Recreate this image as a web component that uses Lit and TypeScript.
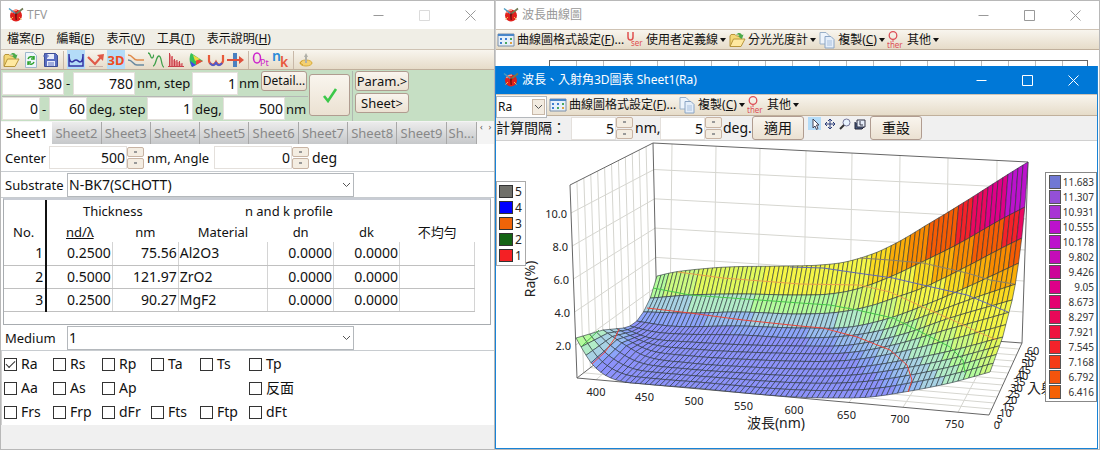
import { LitElement, html, svg, css } from "lit";
import { customElement, property } from "lit/decorators.js";

type Pt = [number, number];

/* ---------- icons ---------- */
const logo = html`<svg class="logo" width="16" height="16" viewBox="0 0 16 16" aria-hidden="true">
  <circle cx="8" cy="8.500" r="6" fill="#e0201c"/><path d="M3.500 6C5 3.500 7 3 9 3.200" stroke="#ff9a80" stroke-width="1.500" fill="none"/>
  <path d="M1 1.500 8 7" stroke="#4a9ac0" stroke-width="1.400" fill="none"/><path d="M8 7 15 1.500" stroke="#6f7a52" stroke-width="1.600" fill="none"/>
  <path d="M7 6.500h2.500l-.8 2.500.3 4H7.500L7 9z" fill="#7c1410"/><path d="M2.500 12.500 5 10M13.500 12.500 11 10" stroke="#f6b64a" stroke-width="1"/></svg>`;
const ic = (body: unknown, w = 18) => html`<svg width=${w} height="18" viewBox="0 0 18 18" aria-hidden="true">${body}</svg>`;
const folder = svg`<path d="M2 15V5l1-1.500h4L8.500 5H13v3" fill="#f5d878" stroke="#b8963c"/><path d="M2 15.500 5.500 8H17l-4 7.500z" fill="#ffe9a0" stroke="#b8963c"/><path d="M8 4c2-3 5-2.500 6 0l1.500-.5L14 8l-4-2.500 1.500-.5C11 3.500 10 3 8 4z" fill="#4aaa4a"/>`;
const refresh = svg`<path d="M3.500 1.500h8l3 3v12h-11z" fill="#eef6fb" stroke="#9fb8cc"/><path d="M6 8c1-2.500 4-3 6-1M12 5v3H9M12 11c-1 2.500-4 3-6 1M6 14v-3h3" fill="none" stroke="#2fa32f" stroke-width="1.500"/>`;
const save = svg`<path d="M2.500 2.500h11l2 2v11h-13z" fill="#5a6ec0" stroke="#3d4d94"/><path d="M5 3h7v5H5zM5 10h8v5H5z" fill="#e8ecfa"/><path d="M1 5h5M4 2.500 6.500 5 4 7.500M6 12h6M6 14h6" stroke="#5a6ec0" fill="none"/>`;
const curveBox = svg`<path d="M2 3v12h14V3M2 3c0 6 1 8 3 8 1.500 0 2-2 4-2s2.500 2 4 2c2 0 3-2 3-8" fill="none" stroke="#3434a4" stroke-width="1.500"/>`;
const reflect = svg`<path d="M1 6l7 7 6-7" fill="none" stroke="#e05a48" stroke-width="2.200"/><path d="M10 4 17 3l-1 7z" fill="#e05a48"/><path d="M2 15.500h14" stroke="#c9b0a8"/>`;
const threeD = svg`<text x="9" y="14" text-anchor="middle" font-size="13" font-weight="700" fill="#ee4a22">3D</text>`;
const wave = svg`<path d="M1 4c5 0 5 5 9 5h7" fill="none" stroke="#e08a4a" stroke-width="1.500"/><path d="M1 9c5 0 5 5 9 5h7" fill="none" stroke="#6a8aa0" stroke-width="1.500"/>`;
const green2 = svg`<path d="M1 2c3 0 2 5 4 5s1-3 2-3M6 15c3 0 3-10 6-10s2 11 5 11" fill="none" stroke="#3fa04a" stroke-width="1.300"/>`;
const bars = svg`<path d="M2 15V2l2 2v2l2-1v4l2-1v2l2-1v2l2 0v1l3 1v3z" fill="#e89090"/><path d="M2.500 2v13M5 5v10M7.500 8v7M10 9v6M12.500 10v5M15 12v3M1 15.500h16" stroke="#c8404a" fill="none"/>`;
const gamut = svg`<path d="M4 2 16 10 5 16C2 12 2 6 4 2z" fill="#35c05a"/><path d="M9 8l7 2-7 4z" fill="#f04838"/><path d="M3 10l6 4-4 2z" fill="#4048e8"/><path d="M6 4l7 4-5 2z" fill="#f0d840"/>`;
const curveRed = svg`<path d="M2 4v6c1 4 5 5 7 1 2 4 6 3 7-1V4" fill="none" stroke="#e85a3a" stroke-width="2.200"/><path d="M3 12c2 3 5 3 6-1 1 4 4 4 6 1" fill="none" stroke="#5058c8" stroke-width="2"/>`;
const slab = svg`<path d="M6 2h4v14H6z" fill="#4a80c0"/><path d="M0 9h14" stroke="#e0503c" stroke-width="2"/><path d="M12 5l5 4-5 4z" fill="#e0503c"/>`;
const opt = svg`<ellipse cx="5" cy="7" rx="3.500" ry="5" fill="none" stroke="#cc22cc" stroke-width="1.500"/><text x="8" y="15" font-size="9" fill="#cc22cc">Pt</text>`;
const nk = svg`<text x="0" y="10" font-size="14" font-weight="600" fill="#2a8ad8">n</text><text x="8" y="16" font-size="14" font-weight="600" fill="#e8583c">k</text>`;
const gold = svg`<ellipse cx="9" cy="12" rx="6" ry="3" fill="#f4d070" stroke="#d8ac3a"/><path d="M9 2 11 6H10v6H8V6H7z" fill="#b0b0a8"/><path d="M5 10l-2 2 3 2" fill="none" stroke="#d0a030"/>`;
const sheet = svg`<path d="M1 3h16v12H1z" fill="#e6f0fa" stroke="#7a8ea8"/><path d="M1 3h16v2H1z" fill="#4a86c8"/><path d="M3 7h2v2H3zM8 7h2v2H8zM3 11h2v2H3z" fill="#3f7ed0"/><path d="M13 7h2v2h-2zM8 11h2v2H8z" fill="#48a860"/><path d="M13 11h2v2h-2z" fill="#e0a040"/>`;
const user = svg`<path d="M2 1v5c0 4 5 4 5 0V1" fill="none" stroke="#e05050" stroke-width="1.500"/><text x="5" y="15" font-size="8" fill="#e05050">ser</text>`;
const copy = svg`<path d="M2 1.500h6l3 3V13H2z" fill="#eef4fb" stroke="#9ab0c8"/><path d="M7 5.500h6l3 3V17H7z" fill="#e4eefa" stroke="#8aa4c4"/><path d="M9 10h5M9 12h5M9 14h5" stroke="#a9c0de"/>`;
const other = svg`<circle cx="6" cy="4.500" r="3.800" fill="none" stroke="#dd5058" stroke-width="1.300"/><path d="M6 8v3" stroke="#dd5058"/><text x="0" y="17" font-size="8" fill="#dd5058">ther</text>`;

@customElement("win-title")
class WinTitle extends LitElement {
  @property() caption = "";
  @property({ type: Boolean, reflect: true }) active = false;
  @property({ type: Boolean }) fixed = false;
  static styles = css`
    :host { display: block; background: #fff; color: #999; }
    :host([active]) { background: #0078d7; color: #fff; }
    .bar { display: flex; align-items: center; height: 28px; padding: 0 1px 0 7px; gap: 3px; }
    .cap { flex: 1; font-weight: normal; font-size: 12px; margin: 0; white-space: nowrap; }
    .btns { display: flex; }
    button { width: 46px; height: 28px; border: 0; background: none; padding: 0; display: grid; place-items: center; color: inherit; }
    .dim { opacity: 0.35; }
  `;
  render() {
    const g = (d: string) => html`<svg width="11" height="11" viewBox="0 0 11 11"><path d=${d} fill="none" stroke="currentColor"/></svg>`;
    return html`<div class="bar">${logo}<h1 class="cap">${this.caption}</h1>
      <div class="btns"><button aria-label="Minimize">${g("M.5 5.500h10")}</button>
      <button class=${this.fixed ? "dim" : ""} aria-label="Maximize">${g("M.5.5h10v10H.5z")}</button>
      <button aria-label="Close">${g("M.5.5l10 10M10.500.5l-10 10")}</button></div></div>`;
  }
}

const controls = css`
  * { box-sizing: border-box; }
  button, input, select { font: inherit; color: #111; margin: 0; }
  .bar { display: flex; align-items: center; height: 21px; background: linear-gradient(#f8f5ee, #e6dcc9); border-top: 1px solid #cfc3b4; border-bottom: 1px solid #c0b09c; font-size: 12px; white-space: nowrap; }
  .tool { display: flex; align-items: center; justify-content: center; gap: 2px; height: 19px; padding: 0; border: 0; background: none; }
  .tool svg { flex: none; }
  .caret { border: 3px solid transparent; border-top: 4px solid #111; border-bottom: 0; }
  .push { border: 1px solid #b09c90; border-radius: 3px; background: linear-gradient(#f9f5ee, #ebe1d2); padding: 0; line-height: 18px; white-space: nowrap; }
  .num { border: 1px solid #e4e0dc; background: #fff; text-align: right; padding: 0 1px; height: 23px; min-width: 0; }
  .spin { display: grid; grid-template-rows: 1fr 1fr; gap: 1px; width: 17px; height: 22px; }
  .spin button { border: 1px solid #c8b4a4; border-radius: 2px; background: #f4ede2; padding: 0; display: grid; place-items: center; }
  .dot { width: 3px; height: 2px; background: #999; }
  .combo { display: grid; align-items: center; }
  .combo select { grid-area: 1 / 1; width: 100%; height: 100%; appearance: none; border: 1px solid #b4b8bc; border-radius: 0; background: #fff; padding: 0 1px; }
  .combo svg { grid-area: 1 / 1; justify-self: end; margin-right: 3px; pointer-events: none; }
`;
const spin = html`<span class="spin"><button aria-label="Up"><i class="dot"></i></button><button aria-label="Down"><i class="dot"></i></button></span>`;
const chevron = html`<svg width="9" height="6" viewBox="0 0 9 6"><path d="M1 1l3.500 3.500L8 1" fill="none" stroke="#555"/></svg>`;
const item = (icon: unknown, label: unknown, caret = true) =>
  html`<button class="tool">${ic(icon)}<span>${label}</span>${caret ? html`<i class="caret"></i>` : ""}</button>`;

/* ---------- film design window ---------- */
@customElement("film-window")
class FilmWindow extends LitElement {
  static styles = [controls, css`
    :host { display: flex; flex-direction: column; background: #fff; border: 1px solid #b8b8b8; min-width: 0; overflow: hidden; }
    .menu { display: flex; gap: 12px; height: 20px; align-items: center; padding-left: 6px; background: #f0eee6; font-size: 12px; }
    .menu a { color: #111; text-decoration: none; white-space: nowrap; }
    .icons { gap: 2px; padding-left: 1px; }
    .icons .tool { width: 18px; }
    .icons .on { background: #b4dcf8; }
    .sep { width: 1px; height: 18px; background: #c8b8a8; margin: 0 1px; }
    .range { display: flex; background: #c6dfc4; height: 51px; padding: 1px 0 0 1px; gap: 2px; }
    .lines { width: 305px; display: grid; grid-template-rows: 24px 24px; row-gap: 1px; }
    .line { display: flex; align-items: center; white-space: nowrap; }
    .line + .line { border-top: 1px solid #b4b8b4; }
    .line span, label { font-size: 13px; }
    .w62 { width: 62px; } .w38 { width: 38px; } .w46 { width: 46px; }
    .t9 { width: 9px; padding-left: 2px; } .t56 { width: 57px; padding-left: 2px; } .t60 { width: 60px; padding-left: 2px; } .t24 { width: 23px; padding-left: 1px; } .t30 { width: 30px; padding-left: 2px; }
    .detail { width: 46px; height: 20px; font-size: 12px; align-self: flex-start; }
    .apply { width: 41px; height: 42px; margin-top: 3px; display: grid; place-items: center; }
    .side { display: grid; grid-template-rows: 20px 20px; gap: 2px; border-left: 1px solid #b0b8b0; padding-left: 2px; }
    .side .push { width: 54px; font-size: 13px; }
    .tabs { display: flex; height: 23px; background: #f4f4f4; padding-top: 1px; }
    .tab { flex: 49 1 0; min-width: 0; border: 0; border-right: 1px solid #a8a8a8; background: linear-gradient(#ececec, #c6c8ca); color: #888; font-size: 13px; padding: 0; white-space: nowrap; }
    .tab.on { flex-grow: 52; background: #fff; color: #111; border: 0; }
    .tab.last { flex-grow: 30; }
    .scroll { flex: 17 1 0; display: flex; justify-content: space-around; font-size: 9px; line-height: 10px; color: #555; }
    .row { display: flex; align-items: center; height: 28px; padding-left: 4px; border-bottom: 1px solid #c8ccd0; white-space: nowrap; }
    .short { height: 26px; }
    .w44 { width: 44px; } .w78 { width: 78px; } .w62l { width: 62px; }
    .gap { padding: 0 3px; }
    .w70 { width: 70px; padding-left: 3px; }
    .wide { width: 287px; height: 24px; }
    .grid { margin: 0 3px 0 2px; height: 127px; border: 1px solid #a8acb0; border-top: 2px solid #c8ccd4; }
    table { border-collapse: collapse; table-layout: fixed; width: 97%; }
    th { font-weight: normal; font-size: 13px; padding: 0; height: 21px; }
    td { text-align: right; padding: 0 1px; height: 23px; border-bottom: 1px solid #c0c0c0; border-right: 1px solid #d4d4d4; line-height: 20px; }
    .no { border-right: 2px solid #111; padding-right: 2px; width: 9%; }
    .thick { width: 28%; }
    .left { text-align: left; }
    .u { text-decoration: underline; }
    .checks { display: grid; grid-template-columns: repeat(6, 49px); grid-auto-rows: 24px; padding: 1px 0 0 2px; height: 74px; border-left: 1px solid #d0d0d0; }
    .checks label { display: flex; align-items: center; gap: 4px; white-space: nowrap; font-size: 14px; }
    .checks input { appearance: none; width: 13px; height: 13px; border: 1px solid #333; display: grid; place-items: center; }
    .checks input:checked::before { content: ""; width: 8px; height: 4px; border-left: 1px solid #333; border-bottom: 1px solid #333; transform: rotate(-45deg) translate(1px, -1px); }
    .status { flex: 1; background: #f0f0f0; }
    .c9 { width: 9%; } .c14 { width: 14%; } .c19 { width: 19%; } .c16 { width: 16%; }
  `];
  num(v: string, cls: string, label: string) {
    return html`<input class="num ${cls}" .value=${v} aria-label=${label}>`;
  }
  render() {
    const menu = [["檔案", "F"], ["編輯", "E"], ["表示", "V"], ["工具", "T"], ["表示說明", "H"]];
    const rows = [["1", "0.2500", "75.56", "Al2O3"], ["2", "0.5000", "121.97", "ZrO2"], ["3", "0.2500", "90.27", "MgF2"]];
    const checks = ["Ra", "Rs", "Rp", "Ta", "Ts", "Tp", "Aa", "As", "Ap", "", "", "反面", "Frs", "Frp", "dFr", "Fts", "Ftp", "dFt"];
    const tool = (b: unknown, on = false) => html`<button class="tool ${on ? "on" : ""}">${ic(b)}</button>`;
    const sep = html`<i class="sep"></i>`;
    return html`
      <win-title caption="TFV" fixed></win-title>
      <nav class="menu">${menu.map(([t, k]) => html`<a href="#">${t}(<u>${k}</u>)</a>`)}</nav>
      <div class="bar icons">${tool(folder)}${tool(refresh)}${tool(save)}${sep}${tool(curveBox, true)}${tool(reflect)}${tool(threeD, true)}${tool(wave)}${tool(green2)}${tool(bars)}${tool(gamut)}${tool(curveRed)}${tool(slab)}${sep}${tool(opt)}${tool(nk)}${sep}${tool(gold)}</div>
      <div class="range">
        <div class="lines">
          <div class="line">${this.num("380", "w62", "from nm")}<span class="t9">-</span>${this.num("780", "w62", "to nm")}<span class="t56">nm, step</span>${this.num("1", "w46", "step nm")}<span class="t24">nm</span><button class="push detail">Detail...</button></div>
          <div class="line">${this.num("0", "w38", "from deg")}<span class="t9">-</span>${this.num("60", "w38", "to deg")}<span class="t60">deg, step</span>${this.num("1", "w46", "step deg")}<span class="t30">deg,</span>${this.num("500", "w62", "nm")}<span class="t24">nm</span></div>
        </div>
        <button class="push apply" aria-label="Apply"><svg width="16" height="16" viewBox="0 0 16 16"><path d="M2 9l4 5L14 2" fill="none" stroke="#3cc84a" stroke-width="2.600"/></svg></button>
        <div class="side"><button class="push">Param.&gt;</button><button class="push">Sheet&gt;</button></div>
      </div>
      <div class="tabs">
        <button class="tab on">Sheet1</button>${[2, 3, 4, 5, 6, 7, 8, 9].map((n) => html`<button class="tab">Sheet${n}</button>`)}<button class="tab last">Sh...</button>
        <span class="scroll"><span>‹</span><span>›</span></span>
      </div>
      <div class="row"><label class="w44" for="center">Center</label><input id="center" class="num w78" .value=${"500"}>${spin}<label class="w70" for="angle">nm, Angle</label><input id="angle" class="num w78" .value=${"0"}>${spin}<span class="gap">deg</span></div>
      <div class="row short"><label class="w62l" for="sub">Substrate</label><span class="combo wide"><select id="sub"><option>N-BK7(SCHOTT)</option></select>${chevron}</span></div>
      <div class="grid"><table>
        <colgroup><col class="c9"><col class="c14"><col class="c14"><col class="c19"><col class="c14"><col class="c14"><col class="c16"></colgroup>
        <thead><tr><th class="no"></th><th colspan="2">Thickness</th><th colspan="3">n and k profile</th><th></th></tr>
        <tr><th class="no">No.</th><th class="u">nd/λ</th><th>nm</th><th>Material</th><th>dn</th><th>dk</th><th>不均勻</th></tr></thead>
        <tbody>${rows.map((r) => html`<tr><td class="no">${r[0]}</td><td>${r[1]}</td><td>${r[2]}</td><td class="left">${r[3]}</td><td>0.0000</td><td>0.0000</td><td></td></tr>`)}</tbody>
      </table></div>
      <div class="row short"><label class="w62l" for="med">Medium</label><span class="combo wide"><select id="med"><option>1</option></select>${chevron}</span></div>
      <div class="checks">${checks.map((c) => (c ? html`<label><input type="checkbox" ?checked=${c === "Ra"}>${c}</label>` : html`<span></span>`))}</div>
      <div class="status"></div>`;
  }
}

/* ---------- 3D surface ---------- */
const hermite = (p: Pt[], x: number): number => {
  let i = 0;
  while (i < p.length - 2 && x > p[i + 1][0]) i++;
  const slope = (a: Pt, b: Pt) => (b[1] - a[1]) / (b[0] - a[0]);
  const a = p[i], b = p[i + 1], h = b[0] - a[0], t = (x - a[0]) / h;
  const m = slope(a, b);
  const m0 = i > 0 ? (slope(p[i - 1], a) + m) / 2 : m;
  const m1 = i < p.length - 2 ? (m + slope(b, p[i + 2])) / 2 : m;
  const t2 = t * t, t3 = t2 * t;
  return (2 * t3 - 3 * t2 + 1) * a[1] + (t3 - 2 * t2 + t) * h * m0 + (3 * t2 - 2 * t3) * b[1] + (t3 - t2) * h * m1;
};
const mix = (a: number, b: number, t: number) => a + (b - a) * t;
const frontX: Pt[] = [[380, 576], [400, 596], [450, 645], [500, 695], [550, 745], [600, 796], [650, 849], [700, 903], [750, 958], [780, 990]];
const backX: Pt[] = [[380, 657], [400, 673], [450, 717], [500, 761], [550, 807], [600, 853], [650, 901], [700, 949], [750, 998], [780, 1028]];
const profiles: Record<number, Pt[]> = {
  12: [[657, 276], [675, 272], [700, 269], [727, 267], [790, 266], [820, 265], [845, 262], [875, 253], [900, 241], [925, 226], [950, 211], [985, 189], [1010, 173], [1028, 162]],
  11: [[652, 298], [690, 295], [740, 294], [800, 295], [830, 294], [857, 289], [890, 277], [920, 263], [960, 243], [1000, 220], [1025, 207]],
  10: [[646, 312], [690, 313], [740, 312], [800, 314], [840, 312], [870, 306], [900, 296], [920, 289], [960, 270], [1000, 249], [1022, 238]],
  9: [[636, 321], [670, 326], [740, 326], [800, 328], [850, 327], [890, 318], [930, 303], [963, 289], [1019, 263]],
  8: [[630, 326], [655, 332], [680, 334], [740, 335], [800, 338], [855, 335], [890, 328], [933, 313], [977, 297], [1016, 284]],
  7: [[623, 328], [650, 338], [690, 342], [800, 346], [850, 345], [900, 335], [950, 318], [1012, 300]],
  4: [[603, 330], [625, 345], [645, 356], [690, 363], [750, 367], [800, 369], [850, 368], [900, 361], [950, 351], [1003, 337]],
  0: [[576, 338], [584, 352], [592, 364], [605, 375], [620, 381], [645, 384], [695, 388], [745, 393], [796, 397], [830, 398], [870, 397], [910, 391], [950, 383], [990, 372]],
};
const gridX = (nm: number, r: number) => mix(hermite(frontX, nm), hermite(backX, nm), r / 12);
const vertex = (nm: number, r: number): Pt => {
  const x = gridX(nm, r);
  if (profiles[r]) return [x, hermite(profiles[r], x)];
  const [lo, hi] = r < 4 ? [0, 4] : [4, 7];
  return [x, mix(vertex(nm, lo)[1], vertex(nm, hi)[1], (r - lo) / (hi - lo))];
};
const floorY = (x: number, s: number) => mix(378 + ((x - 577) * 37) / 412, 316 + ((x - 657) * 27) / 365, s);
const unit = (x: number, s: number) => mix(16.5 + (x - 577) / 275, 14.65 + (x - 657) / 430, s);
const ramp: [number, string][] = [[0.75, "#8c92fa"], [0.95, "#8ca4fa"], [1.2, "#98bcf2"], [1.55, "#a8d2e4"], [1.9, "#b2ecc8"], [2.3, "#b4fc9c"], [2.7, "#ccfa80"], [3.1, "#e2fa5c"], [4.2, "#f5f646"], [4.8, "#fada20"], [5.6, "#faac08"], [6.3, "#f88a00"], [7.4, "#f55c04"], [8, "#f4222a"], [8.8, "#ea0860"], [9.6, "#de0088"], [99, "#bc12cc"]];
const tint = (v: number) => ramp.find(([m]) => v < m)![1];

function surface() {
  const faces = [];
  for (let r = 11; r >= 0; r--)
    for (let nm = 380; nm < 780; nm += 5) {
      const q = [vertex(nm, r), vertex(nm + 5, r), vertex(nm + 5, r + 1), vertex(nm, r + 1)];
      const cx = (q[0][0] + q[2][0]) / 2, cy = (q[0][1] + q[1][1] + q[2][1] + q[3][1]) / 4, s = (r + 0.5) / 12;
      const v = (floorY(cx, s) - cy) / unit(cx, s);
      faces.push(svg`<path d="M${q.map((p) => p.map((n) => n.toFixed(1)).join(" ")).join("L")}Z" fill=${tint(v)}/>`);
    }
  return faces;
}
const poly = (s: string, color: string) => svg`<polyline points=${s} fill="none" stroke=${color}/>`;

@customElement("surface-chart")
class SurfaceChart extends LitElement {
  static styles = css`
    :host { display: block; background: #fff; min-height: 0; }
    .plot { display: block; width: 100%; height: 100%; }
    .wall { stroke: #d6d6d0; fill: none; }
    .frame { stroke: #666; fill: none; }
    .mesh { stroke: #263038; stroke-width: 0.6; stroke-linejoin: round; }
    .lab { font-size: 11px; fill: #222; }
    .axis { font-size: 14px; fill: #222; }
    .key { font-size: 12px; fill: #222; }
    .small { font-size: 10px; fill: #333; }
  `;
  render() {
    const nms = [400, 450, 500, 550, 600, 650, 700, 750];
    const line = (a: number, b: number, c: number, d: number) => svg`<line x1=${a} y1=${b} x2=${c} y2=${d}/>`;
    const keys: [string, string][] = [["5", "#70706a"], ["4", "#0000ff"], ["3", "#f06408"], ["2", "#146414"], ["1", "#f42024"]];
    const scale: [string, string][] = [["11.683", "#7078d4"], ["11.307", "#9450d8"], ["10.931", "#a834d4"], ["10.555", "#bc12cc"], ["10.178", "#bc12cc"], ["9.802", "#c40cb8"], ["9.426", "#cc0498"], ["9.05", "#de0088"], ["8.673", "#e40070"], ["8.297", "#e80858"], ["7.921", "#ee1440"], ["7.545", "#f4222a"], ["7.168", "#f43c18"], ["6.792", "#f4540c"], ["6.416", "#f46004"]];
    return html`<svg class="plot" viewBox="496 141 601 307" preserveAspectRatio="xMidYMid meet" role="img" aria-label="Ra(%)">
      <g class="wall">
        ${Array.from({ length: 11 }, (_, i) => { const t = (i + 1) / 12; return line(mix(570, 653, t), mix(185, 143, t), mix(577, 657, t), mix(378, 316, t)); })}
        ${[2, 4, 6, 8, 10].map((v) => [line(577 - v * 0.6, 378 - 16.5 * v, 657 - v * 0.3, 316 - 14.65 * v), line(657 - v * 0.3, 316 - 14.65 * v, 1022 + v * 0.5, 343 - 15.5 * v)])}
        ${nms.map((n) => { const b = hermite(backX, n); return [line(b - 1, 143 + (b - 653) * 0.051, b - 3, 316 + (b - 657) * 0.074), line(hermite(frontX, n), floorY(hermite(frontX, n), 0), b - 3, floorY(b, 1))]; })}
        ${Array.from({ length: 11 }, (_, i) => { const t = (i + 1) / 12; return line(mix(577, 657, t), mix(378, 316, t), mix(989, 1022, t), mix(415, 343, t)); })}
      </g>
      <path class="frame" d="M577 378 570 185 653 143 1028 162 1022 343 989 415 577 378 657 316 653 143M657 316 1022 343"/>
      <g class="mesh">${surface()}</g>
      <g>
        ${poly("647,308 690,313 743,320 800,326 823,328 857,337 890,350 907,365 912,380 908,392", "#e8483c")}
        ${poly("619,329 615,338 605,352 592,364", "#e8483c")}
        ${poly("653,288 690,295 800,303 830,305 857,310 893,318 923,333 950,347 963,360 965,373", "#48c84c")}
        ${poly("582,346 599,330", "#48b84c")}
        ${poly("678,272 723,278 800,284 860,285 890,292 923,307 957,322 978,332 997,340", "#e8a04c")}
        ${poly("790,267 823,268 857,273 893,278 923,285 967,295 1008,312", "#6068b0")}
        ${poly("860,258 890,260 923,263 967,273 990,280 1014,284", "#8c8068")}
      </g>
      ${[2, 4, 6, 8, 10].map((v) => svg`<text class="lab" text-anchor="end" x=${572 - v / 2} y=${383 - 16.5 * v}>${v.toFixed(1)}</text>`)}
      ${nms.map((n, i) => svg`<text class="lab" text-anchor="middle" x=${hermite(frontX, n) - i / 2} y=${mix(396, 428, i / 7)}>${n}</text>`)}
      ${Array.from({ length: 13 }, (_, i) => svg`<text class="lab" text-anchor="middle" x=${mix(997, 1030, i / 12) + (i > 1 ? 3 : 0)} y=${mix(429, 355, i / 12)}>${i * 5}</text>`)}
      <text class="axis" text-anchor="middle" x="776" y="428">波長(nm)</text>
      <text class="axis" x="1027" y="393">入射角</text>
      <text class="axis" text-anchor="middle" transform="translate(535 279) rotate(-90)">Ra(%)</text>
      <rect x="496.500" y="181.500" width="29" height="84" fill="#fff" stroke="#aaa"/>
      ${keys.map(([t, c], i) => svg`<rect x="499.500" y=${185.5 + i * 16} width="13" height="12" fill=${c} stroke="#333"/><text class="key" x="515" y=${196 + i * 16}>${t}</text>`)}
      <rect x="1045.500" y="172.500" width="51" height="229" fill="#fff" stroke="#888"/>
      ${scale.map(([t, c], i) => svg`<rect x="1049.500" y=${175.5 + i * 15} width="11" height="13" fill=${c} stroke="#555"/><text class="small" text-anchor="end" x="1094" y=${186 + i * 15}>${t}</text>`)}
    </svg>`;
  }
}

@customElement("surface-window")
class SurfaceWindow extends LitElement {
  static styles = [controls, css`
    :host { display: flex; flex-direction: column; background: #f0f0f0; border: 1px solid #1883d7; border-top: 0; box-sizing: border-box; overflow: hidden; }
    .bar { height: 22px; gap: 2px; }
    .mode { width: 51px; height: 19px; }
    .mode svg { box-sizing: content-box; padding: 4px 1px; margin-right: 2px; border: 1px solid #c8b8a8; background: #f2ebe0; }
    .opts { display: flex; align-items: center; height: 25px; white-space: nowrap; border-bottom: 1px solid #d0d0d0; }
    .lead { width: 75px; }
    .w46 { width: 45px; }
    .t27 { width: 27px; padding-left: 2px; }
    .t30 { width: 30px; padding-left: 1px; }
    .big { width: 52px; height: 24px; }
    .modes { display: flex; align-self: flex-start; padding: 1px 4px; gap: 2px; width: 66px; }
    .modes button { width: 13px; height: 13px; border: 0; background: none; padding: 0; display: grid; place-items: center; }
    .modes .on { background: #b4dcf8; }
    surface-chart { flex: 1; }
  `];
  render() {
    const m = (b: unknown, label: string, on = false) => html`<button class=${on ? "on" : ""} aria-label=${label}><svg width="12" height="12" viewBox="0 0 12 12">${b}</svg></button>`;
    return html`
      <win-title active caption="波長、入射角3D圖表 Sheet1(Ra)"></win-title>
      <div class="bar"><span class="combo mode"><select aria-label="Mode"><option>Ra</option></select>${chevron}</span>
        ${item(sheet, html`曲線圖格式設定(<u>F</u>)...`, false)}${item(copy, html`複製(<u>C</u>)`)}${item(other, "其他")}</div>
      <div class="opts"><span class="lead">計算間隔：</span><input class="num w46" aria-label="nm" .value=${"5"}>${spin}<span class="t27">nm,</span><input class="num w46" aria-label="deg" .value=${"5"}>${spin}<span class="t30">deg.</span>
        <button class="push big">適用</button>
        <span class="modes">${m(svg`<path d="M4 1v9l2-2 1.500 3.500 1.500-1L7.500 7H10z" fill="#fff" stroke="#445"/>`, "Select", true)}${m(svg`<path d="M6 1v10M1 6h10M4 3l2-2 2 2M4 9l2 2 2-2M3 4 1 6l2 2M9 4l2 2-2 2" fill="none" stroke="#2a3c78"/>`, "Move")}${m(svg`<circle cx="7.500" cy="4.500" r="3.500" fill="#e8f4ff" stroke="#779"/><path d="M5 7l-4 4" stroke="#333" stroke-width="2"/>`, "Zoom")}${m(svg`<path d="M1 4v7h7l2-2" fill="#445a80" stroke="#223"/><path d="M3 2h8v7H3z" fill="#e4ecf8" stroke="#334"/><path d="M6 3v4h3" fill="none" stroke="#334"/>`, "Rotate")}</span>
        <button class="push big">重設</button></div>
      <surface-chart></surface-chart>`;
  }
}

@customElement("curve-window")
class CurveWindow extends LitElement {
  static styles = [controls, css`
    :host { display: block; background: #fff; border: 1px solid #b8b8b8; border-left-color: #ccc; min-width: 0; overflow: hidden; }
    .bar { gap: 2px; padding-left: 1px; }
    .plot { margin: 10px 11px 0 53px; height: 60px; border: 1px solid #666; background: repeating-linear-gradient(90deg, transparent 0 26px, #bbb 26px 27px); }
  `];
  render() {
    return html`<win-title caption="波長曲線圖"></win-title>
      <div class="bar">${item(sheet, html`曲線圖格式設定(<u>F</u>)...`, false)}${item(user, "使用者定義線")}${item(folder, "分光光度計")}${item(copy, html`複製(<u>C</u>)`)}${item(other, "其他")}</div>
      <div class="plot"></div>`;
  }
}

@customElement("app-root")
class AppRoot extends LitElement {
  static styles = css`
    :host { display: grid; grid-template-columns: 495fr 605fr; min-height: 100vh; background: #fff; color: #111; font: 14px/20px "Noto Sans", "Noto Sans CJK TC", sans-serif; }
    film-window { box-sizing: border-box; }
    .desk { position: relative; min-width: 0; display: grid; }
    surface-window { position: absolute; inset: 66px 2px 1px 0; }
  `;
  render() {
    return html`<film-window></film-window><div class="desk"><curve-window></curve-window><surface-window></surface-window></div>`;
  }
}
